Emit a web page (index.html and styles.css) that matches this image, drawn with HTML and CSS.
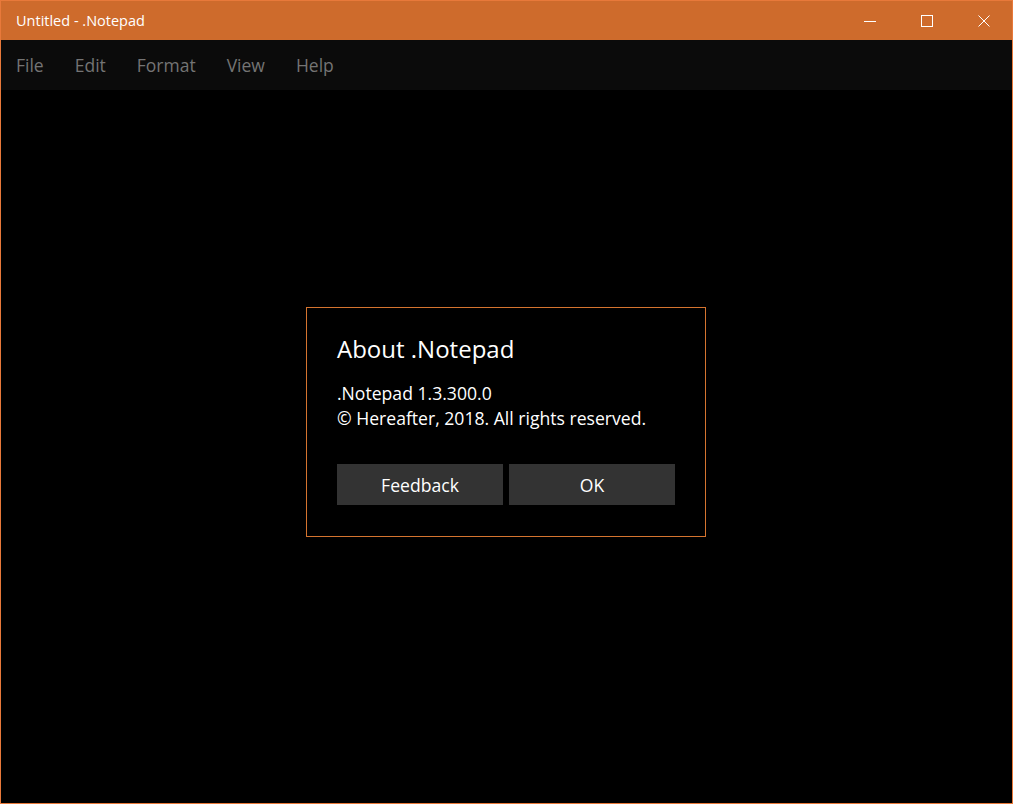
FILE: index.html
```html
<!DOCTYPE html>
<html>
<head>
<meta charset="utf-8">
<link rel="stylesheet" href="styles.css">
</head>
<body>
<div class="window">
  <div class="titlebar">
    <div class="title">Untitled - .Notepad</div>
    <div class="controls">
      <div class="ctl"><svg width="12" height="12" viewBox="0 0 12 12"><line x1="0" y1="6.5" x2="12" y2="6.5" stroke="#fff" stroke-width="1"/></svg></div>
      <div class="ctl"><svg width="12" height="12" viewBox="0 0 12 12"><rect x="0.5" y="0.5" width="11" height="11" fill="none" stroke="#fff" stroke-width="1"/></svg></div>
      <div class="ctl"><svg width="12" height="12" viewBox="0 0 12 12"><path d="M0.5 0.5 L11.5 11.5 M11.5 0.5 L0.5 11.5" stroke="#fff" stroke-width="1"/></svg></div>
    </div>
  </div>
  <div class="menubar">
    <span class="menu">File</span>
    <span class="menu">Edit</span>
    <span class="menu">Format</span>
    <span class="menu">View</span>
    <span class="menu">Help</span>
  </div>
  <div class="content">
    <div class="dialog">
      <div class="dtitle">About .Notepad</div>
      <div class="dtext">.Notepad 1.3.300.0</div>
      <div class="dtext">© Hereafter, 2018. All rights reserved.</div>
      <div class="buttons">
        <div class="btn">Feedback</div>
        <div class="btn">OK</div>
      </div>
    </div>
  </div>
</div>
</body>
</html>
```
FILE: styles.css
```css
html, body {
  margin: 0;
  padding: 0;
  background: #000;
}
.window {
  width: 1013px;
  height: 804px;
  box-sizing: border-box;
  border: 1px solid #e8793a;
  display: flex;
  flex-direction: column;
  font-family: "Open Sans", "Noto Sans", sans-serif;
  background: #000;
  overflow: hidden;
}
.titlebar {
  height: 39px;
  background: #ce6b2c;
  display: flex;
  align-items: center;
  justify-content: space-between;
  color: #fff;
}
.title {
  padding-left: 15px;
  font-size: 14.5px;
}
.controls {
  display: flex;
  height: 100%;
}
.ctl {
  width: 57px;
  height: 100%;
  display: flex;
  align-items: center;
  justify-content: center;
}
.ctl svg { display: block; }
.menubar {
  height: 50px;
  background: #0b0b0b;
  display: flex;
  align-items: center;
  padding-left: 15px;
  gap: 31px;
}
.menu {
  color: #747474;
  font-size: 17.5px;
}
.content {
  flex: 1;
  display: flex;
  justify-content: center;
  align-items: flex-start;
}
.dialog {
  margin-top: 217px;
  width: 400px;
  height: 230px;
  box-sizing: border-box;
  border: 1px solid #d5742f;
  padding: 25px 30px 0 30px;
  color: #fff;
  margin-left: -1px;
}
.dtitle {
  font-size: 24px;
  line-height: 32px;
  margin-bottom: 16px;
}
.dtext {
  font-size: 17.6px;
  line-height: 25px;
}
.buttons {
  display: flex;
  gap: 6px;
  margin-top: 33px;
}
.btn {
  width: 166px;
  height: 41px;
  background: #333;
  color: #fff;
  font-size: 17.6px;
  display: flex;
  align-items: center;
  justify-content: center;
}
```
